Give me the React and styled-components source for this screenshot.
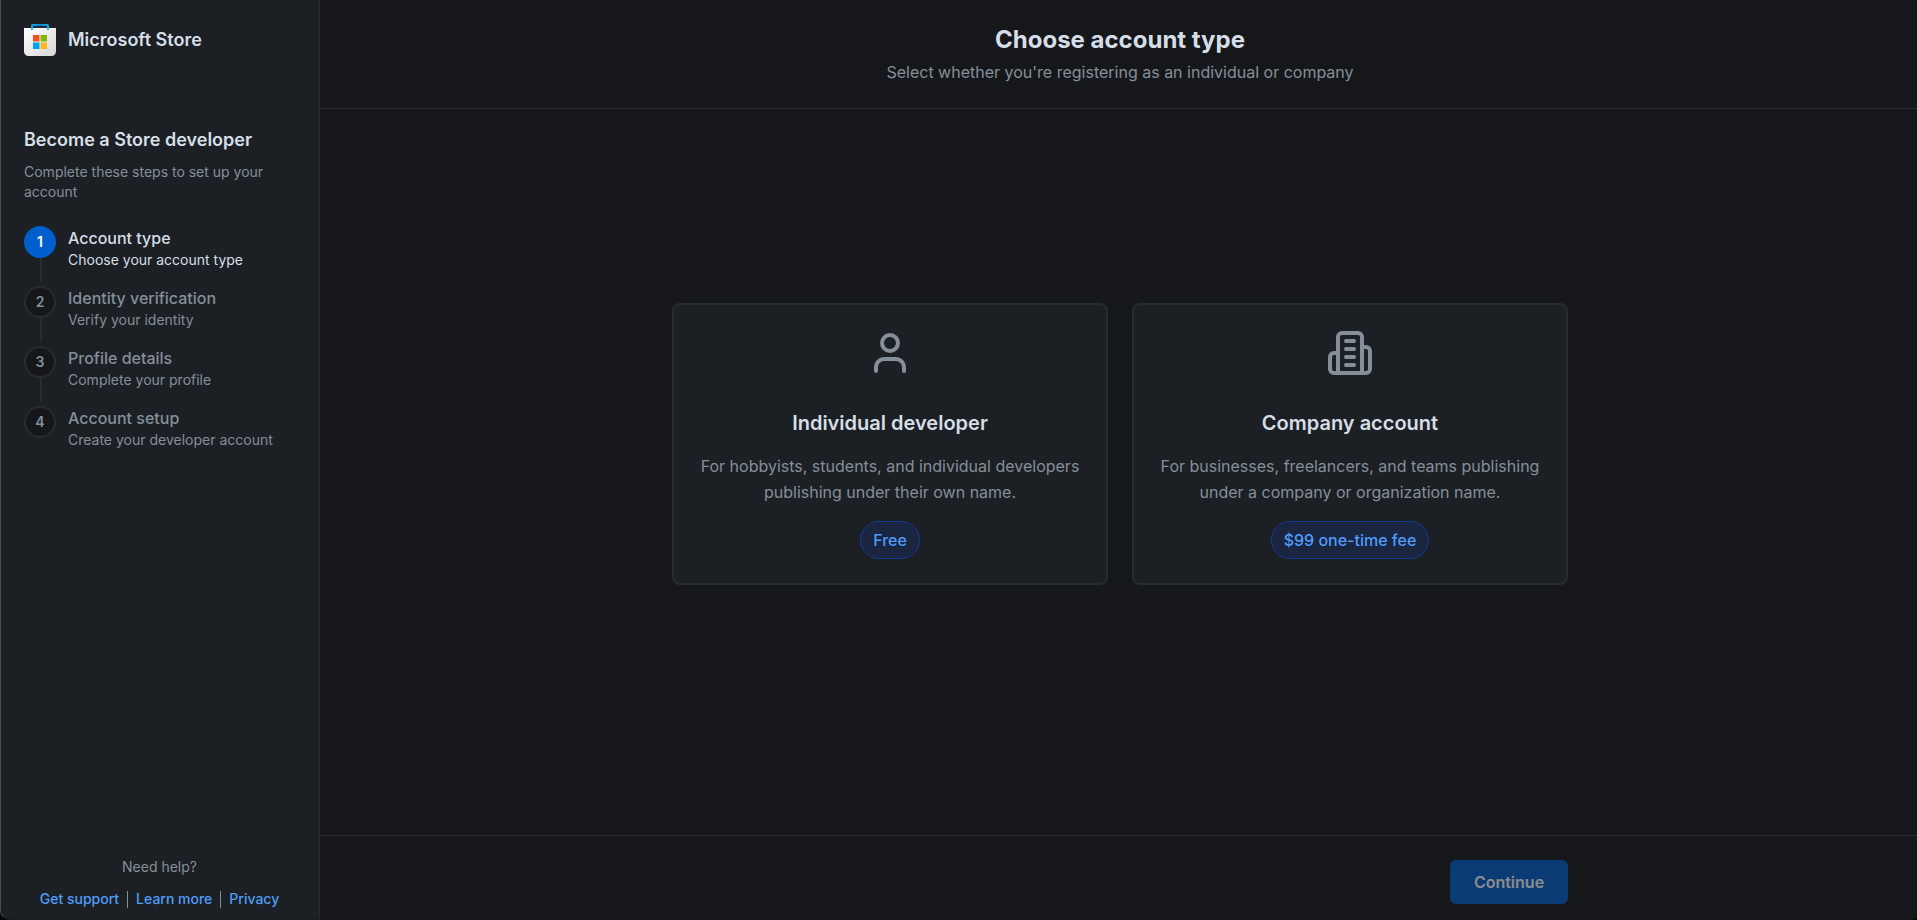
import React from 'react';
import styled, { createGlobalStyle } from 'styled-components';

const GlobalStyle = createGlobalStyle`
  * {
    box-sizing: border-box;
    margin: 0;
    padding: 0;
  }

  body {
    background: #08080a;
    font-family: Inter, sans-serif;
    overflow: hidden;
  }
`;

const Page = styled.div`
  display: flex;
  width: 1920px;
  height: 920px;
  background: #16171b;
  border-left: 1px solid #4a4c50;
  border-bottom: 1px solid #1a1b1f;
  border-radius: 0 0 10px 10px;
  overflow: hidden;
`;

const Sidebar = styled.aside`
  display: flex;
  flex-direction: column;
  flex-shrink: 0;
  width: 319px;
  padding: 24px 23px 10px;
  background: #1c2024;
  border-right: 1px solid #292b30;
`;

const Brand = styled.div`
  display: flex;
  align-items: center;
  gap: 12px;
  height: 32px;
  margin-bottom: 69px;
  color: #d5dee7;
  font-size: 18px;
  font-weight: 600;

  svg {
    display: block;
  }

  span {
    padding-bottom: 2px;
  }
`;

const SideTitle = styled.h2`
  color: #d5dee7;
  font-size: 18px;
  font-weight: 600;
  line-height: 29px;
  margin-bottom: 8px;
`;

const SideText = styled.p`
  color: #848f99;
  font-size: 14px;
  line-height: 20px;
  margin-bottom: 24px;
`;

const Steps = styled.ol`
  list-style: none;
`;

const Step = styled.li`
  display: flex;
  gap: 12px;
  height: 60px;
`;

const Marker = styled.div`
  display: flex;
  flex-direction: column;
  align-items: center;
  width: 32px;
`;

const StepNumber = styled.span`
  display: flex;
  align-items: center;
  justify-content: center;
  width: 32px;
  height: 32px;
  padding-bottom: 1px;
  border-radius: 50%;
  border: 2px solid ${({ $active }) => ($active ? '#005fcc' : '#292b30')};
  background: ${({ $active }) => ($active ? '#005fcc' : '#16171b')};
  color: ${({ $active }) => ($active ? '#ffffff' : '#848f99')};
  font-size: 14px;
  font-weight: 600;
`;

const Connector = styled.span`
  width: 2px;
  height: 24px;
  margin-left: 2px;
  background: #292b30;
`;

const StepText = styled.div`
  h3 {
    color: ${({ $active }) => ($active ? '#d5dee7' : '#848f99')};
    font-size: 16px;
    font-weight: 500;
    line-height: 24px;
  }

  p {
    color: ${({ $active }) => ($active ? '#d5dee7' : '#848f99')};
    font-size: 14px;
    line-height: 20px;
  }
`;

const Help = styled.div`
  margin-top: auto;
  padding-right: 1px;
  text-align: center;
  color: #848f99;
  font-size: 14px;
  line-height: 20px;
`;

const HelpLinks = styled.div`
  display: flex;
  align-items: center;
  justify-content: center;
  gap: 8px;
  margin-top: 12px;

  a {
    color: #4f9cf9;
    font-weight: 500;
    text-decoration: none;
  }
`;

const Divider = styled.span`
  width: 1px;
  height: 17px;
  background: #848f99;
`;

const Main = styled.main`
  display: flex;
  flex-direction: column;
  flex: 1;
`;

const Header = styled.header`
  height: 109px;
  padding-top: 21px;
  border-bottom: 1px solid #292b30;
  text-align: center;

  h1 {
    color: #d5dee7;
    font-size: 24px;
    font-weight: 700;
    line-height: 38px;
  }

  p {
    color: #848f99;
    font-size: 16px;
    line-height: 26px;
  }
`;

const Content = styled.section`
  display: flex;
  align-items: flex-start;
  justify-content: center;
  gap: 24px;
  flex: 1;
  padding-top: 194px;
`;

const Card = styled.article`
  display: flex;
  flex-direction: column;
  align-items: center;
  width: 436px;
  height: 282px;
  padding: 24px;
  border: 2px solid #292b32;
  border-radius: 8px;
  background: #1c2024;
  text-align: center;

  svg {
    display: block;
    margin-bottom: 30px;
  }

  h2 {
    color: #d5dee7;
    font-size: 20px;
    font-weight: 600;
    line-height: 32px;
    margin-bottom: 14px;
  }

  p {
    color: #848f99;
    font-size: 16px;
    line-height: 26px;
    white-space: nowrap;
  }
`;

const Badge = styled.span`
  margin-top: auto;
  padding: 5px 12px;
  border: 1px solid #123c96;
  border-radius: 19px;
  background: #1a2540;
  color: #4f9cf9;
  font-size: 16px;
  font-weight: 500;
  line-height: 26px;
`;

const Footer = styled.footer`
  display: flex;
  justify-content: flex-end;
  align-items: flex-start;
  height: 84px;
  padding: 24px 352px 0 0;
  border-top: 1px solid #292b30;
`;

const ContinueButton = styled.button`
  width: 118px;
  height: 44px;
  border: none;
  border-radius: 6px;
  background: #005fcc;
  color: #ffffff;
  font-family: inherit;
  font-size: 16px;
  font-weight: 600;
  opacity: 0.5;
`;

const StoreLogo = () => (
  <svg width="32" height="32" viewBox="0 0 32 32">
    <defs>
      <linearGradient id="bag" x1="0" y1="0" x2="1" y2="1">
        <stop offset="0" stopColor="#ffffff" />
        <stop offset="1" stopColor="#d6d6d6" />
      </linearGradient>
      <linearGradient id="handle" x1="0" y1="0" x2="32" y2="0" gradientUnits="userSpaceOnUse">
        <stop offset="0.25" stopColor="#0fb0f0" />
        <stop offset="0.5" stopColor="#0f8ae8" />
        <stop offset="0.75" stopColor="#1fb8f0" />
      </linearGradient>
    </defs>
    <path d="M0 4h32v23.5a4.500 4.500 0 0 1-4.500 4.500h-23A4.500 4.500 0 0 1 0 27.500z" fill="url(#bag)" />
    <path d="M8.500 4h15V1.500h-15z" fill="#12304a" />
    <path d="M8 6V1.750Q8 .900 9 .900h14q1 0 1 .850V6" fill="none" stroke="url(#handle)" strokeWidth="1.800" />
    <path d="M9 11h6.500v6.500H9z" fill="#f25022" />
    <path d="M16.500 11H23v6.500h-6.500z" fill="#7fba00" />
    <path d="M9 18.500h6.500V25H9z" fill="#00a4ef" />
    <path d="M16.500 18.500H23V25h-6.500z" fill="#ffb61a" />
  </svg>
);

const CardIcon = ({ children }) => (
  <svg
    width="48"
    height="48"
    viewBox="0 0 24 24"
    fill="none"
    stroke="#848f99"
    strokeWidth="2"
    strokeLinecap="round"
    strokeLinejoin="round"
  >
    {children}
  </svg>
);

const steps = [
  { title: 'Account type', text: 'Choose your account type' },
  { title: 'Identity verification', text: 'Verify your identity' },
  { title: 'Profile details', text: 'Complete your profile' },
  { title: 'Account setup', text: 'Create your developer account' },
];

const App = () => {
  return (
    <>
      <GlobalStyle />
      <Page>
        <Sidebar>
          <Brand>
            <StoreLogo />
            <span>Microsoft Store</span>
          </Brand>
          <SideTitle>Become a Store developer</SideTitle>
          <SideText>Complete these steps to set up your account</SideText>
          <Steps>
            {steps.map((step, i) => (
              <Step key={step.title}>
                <Marker>
                  <StepNumber $active={i === 0}>{i + 1}</StepNumber>
                  {i < steps.length - 1 && <Connector />}
                </Marker>
                <StepText $active={i === 0}>
                  <h3>{step.title}</h3>
                  <p>{step.text}</p>
                </StepText>
              </Step>
            ))}
          </Steps>
          <Help>
            <p>Need help?</p>
            <HelpLinks>
              <a href="#support">Get support</a>
              <Divider />
              <a href="#learn">Learn more</a>
              <Divider />
              <a href="#privacy">Privacy</a>
            </HelpLinks>
          </Help>
        </Sidebar>

        <Main>
          <Header>
            <h1>Choose account type</h1>
            <p>Select whether you're registering as an individual or company</p>
          </Header>
          <Content>
            <Card>
              <CardIcon>
                <path d="M19 21v-2a4 4 0 0 0-4-4H9a4 4 0 0 0-4 4v2" />
                <circle cx="12" cy="7" r="4" />
              </CardIcon>
              <h2>Individual developer</h2>
              <p>
                For hobbyists, students, and individual developers
                <br />
                publishing under their own name.
              </p>
              <Badge>Free</Badge>
            </Card>
            <Card>
              <CardIcon>
                <path d="M6 22V4a2 2 0 0 1 2-2h8a2 2 0 0 1 2 2v18Z" />
                <path d="M6 12H4a2 2 0 0 0-2 2v6a2 2 0 0 0 2 2h2" />
                <path d="M18 9h2a2 2 0 0 1 2 2v9a2 2 0 0 1-2 2h-2" />
                <path d="M10 6h4M10 10h4M10 14h4M10 18h4" />
              </CardIcon>
              <h2>Company account</h2>
              <p>
                For businesses, freelancers, and teams publishing
                <br />
                under a company or organization name.
              </p>
              <Badge>$99 one-time fee</Badge>
            </Card>
          </Content>
          <Footer>
            <ContinueButton>Continue</ContinueButton>
          </Footer>
        </Main>
      </Page>
    </>
  );
};

export default App;
